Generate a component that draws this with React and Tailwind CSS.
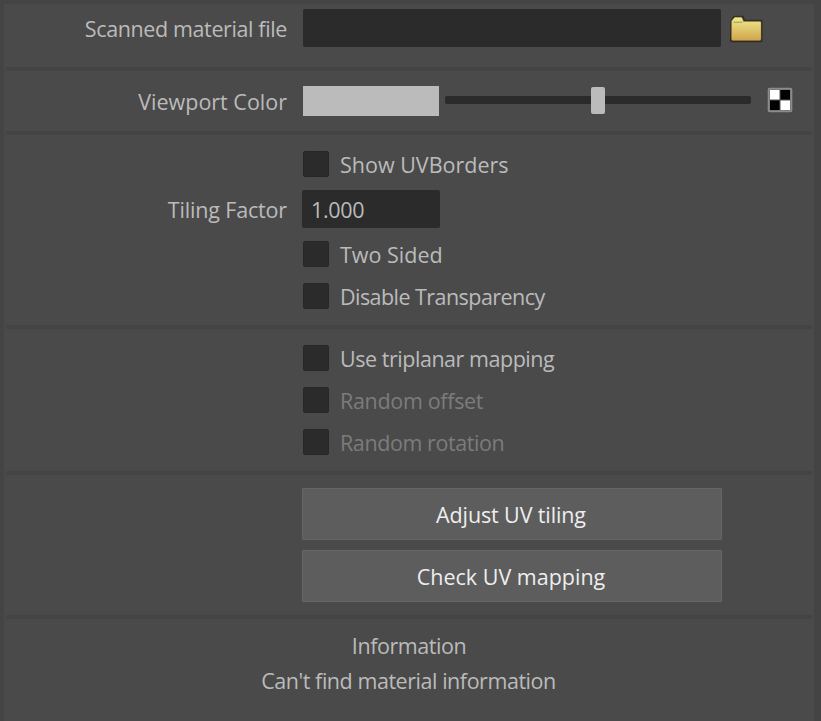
import React, { useState } from 'react';

export default function App() {
  const [file,   setFile]   = useState('');
  const [tiling, setTiling] = useState('1.000');
  const [level,  setLevel]  = useState(50);

  return (
    <div className="h-[721px] w-[821px] overflow-hidden bg-[#444444] pl-1 pt-1 pr-[7px] text-[21.5px] font-normal leading-[26px] text-[#bbbbbb]"
      style={{ fontFamily: "'Open Sans', 'Noto Sans', sans-serif", fontKerning: 'none' }}>
      <div className="flex h-full flex-col bg-[#4a4a4a] px-0.5">
        {/* Material file */}
        <section className="flex h-[63px] items-start pt-[5px]">
          <Label className="pt-[7px] tracking-[-0.38px]">Scanned material file</Label>
          <input value={file} onChange={(e) => setFile(e.target.value)} aria-label="Scanned material file"
            className="h-[38px] w-[418px] rounded-xs bg-[#2b2b2b] px-2 outline-none" />
          <button className="ml-[8px] mt-[5px]"><FolderIcon /></button>
        </section>

        <Divider />

        {/* Viewport color */}
        <section className="flex h-[60px] items-start pt-[15px]">
          <Label className="pt-[3px]">Viewport Color</Label>
          <div className="h-[30px] w-[136px] bg-[#bbbbbb]" />
          <Slider value={level} onChange={setLevel} />
          <button className="ml-4 mt-[1px]"><CheckerIcon /></button>
        </section>

        <Divider />

        <section className="flex h-[190px] flex-col pt-4">
          <Check label="Show UVBorders" />
          <div className="mt-[13px] mb-[13px] flex h-[38px]">
            <Label className="pt-[7px] tracking-[-0.16px]">Tiling Factor</Label>
            <input value={tiling} onChange={(e) => setTiling(e.target.value)} aria-label="Tiling Factor"
              className="-ml-px h-[38px] w-[138px] rounded-xs bg-[#2b2b2b] px-[9px] tracking-[-0.3px] outline-none" />
          </div>
          <Check label="Two Sided" />
          <Check label="Disable Transparency" className="mt-4 tracking-[-0.55px]" />
        </section>

        <Divider />

        <section className="flex h-[142px] flex-col gap-4 pt-4">
          <Check label="Use triplanar mapping" className="tracking-[-0.46px]" />
          <Check label="Random offset" className="tracking-[-0.32px]" disabled />
          <Check label="Random rotation" className="tracking-[-0.42px]" disabled />
        </section>

        <Divider />

        <section className="flex h-[140px] flex-col gap-2.5 pl-[296px] pt-[13px]">
          <Action className="pr-2 tracking-[-0.12px]">Adjust UV tiling</Action>
          <Action className="pr-2">Check UV mapping</Action>
        </section>

        <Divider />

        <section className="flex flex-col items-center gap-[9px] pt-[14px] text-center">
          <p className="tracking-[-0.45px]">Information</p>
          <p className="pr-px tracking-[-0.45px]">Can't find material information</p>
        </section>
      </div>
    </div>
  );
}

const Divider = () => <div className="h-1 shrink-0 bg-[#444444]" />;

const Label = ({ className = '', children }) => (
  <span className={`mr-4 w-[281px] shrink-0 whitespace-nowrap text-right ${className}`}>{children}</span>
);

const Check = ({ label, className = '', disabled = false }) => {
  const [on, setOn] = useState(false);
  return (
    <label className={`ml-[297px] flex h-[26px] items-center whitespace-nowrap ${disabled ? 'text-[#7c7c7c]' : ''} ${className}`}>
      <input type="checkbox" checked={on} disabled={disabled} onChange={() => setOn(!on)}
        className="mr-[11px] size-[26px] shrink-0 appearance-none rounded-xs border border-[#272727] bg-[#2b2b2b] checked:bg-[#bbbbbb]" />
      <span className="pt-0.5">{label}</span>
    </label>
  );
};

const Action = ({ className = '', children }) => (
  <button className={`h-[52px] w-[420px] rounded-[1px] border border-[#656565] bg-[#5d5d5d] pl-1.5 pt-0.5 text-[#eeeeee] ${className}`}>
    {children}
  </button>
);

const Slider = ({ value, onChange }) => (
  <input type="range" min="0" max="100" value={value} onChange={(e) => onChange(Number(e.target.value))} aria-label="Viewport Color"
    className="ml-1.5 mt-[10px] h-2 w-[306px] appearance-none rounded-xs bg-[#2b2b2b]
               [&::-webkit-slider-thumb]:h-[27px] [&::-webkit-slider-thumb]:w-[14px] [&::-webkit-slider-thumb]:appearance-none
               [&::-webkit-slider-thumb]:rounded-xs [&::-webkit-slider-thumb]:bg-[#bbbbbb]" />
);

const FolderIcon = () => (
  <svg width="34" height="30" viewBox="0 0 34 30" className="block">
    <defs>
      <linearGradient id="folder" x1="0" y1="0" x2="0" y2="1">
        <stop offset="0" stopColor="#f0ea90" />
        <stop offset="1" stopColor="#d0a54c" />
      </linearGradient>
    </defs>
    <path d="M1.5 6.5 L4 2.8 Q4.8 1.8 6 1.8 H13 Q14.5 1.8 15 3.2 L16 5.8 H32 Q33.5 5.8 33.5 7.5 V26.5 Q33.5 28.3 31.5 28.3 H3 Q0.9 28.3 0.9 26.5 Z" fill="#25241d" fillOpacity="0.8" />
    <path d="M2.6 8.5 V7 L5 4 Q5.5 3.3 6.2 3.3 H12 Q12.8 3.3 13.2 4.2 L14.6 7.4 H31 Q32 7.4 32 8.5 V25 Q32 26.5 30.5 26.5 H4 Q2.5 26.5 2.5 25 Z" fill="url(#folder)" stroke="#a98032" strokeWidth="0.4" />
    <path d="M4.5 8.3 H13.5" stroke="#b9ad62" strokeWidth="1.5" />
  </svg>
);

const CheckerIcon = () => (
  <svg width="26" height="26" viewBox="0 0 26 26" className="block">
    <rect x="0.7" y="0.7" width="24.6" height="24.6" rx="2" fill="#8c8c8c" />
    <rect x="2.7" y="2.7" width="20.6" height="20.6" fill="#555555" />
    <path d="M3 3h9.5v9.5H3zM13.5 13.5H23V23h-9.5z" fill="#ffffff" />
    <path d="M13.5 3H23v9.5h-9.5zM3 13.5h9.5V23H3z" fill="#000000" />
  </svg>
);
